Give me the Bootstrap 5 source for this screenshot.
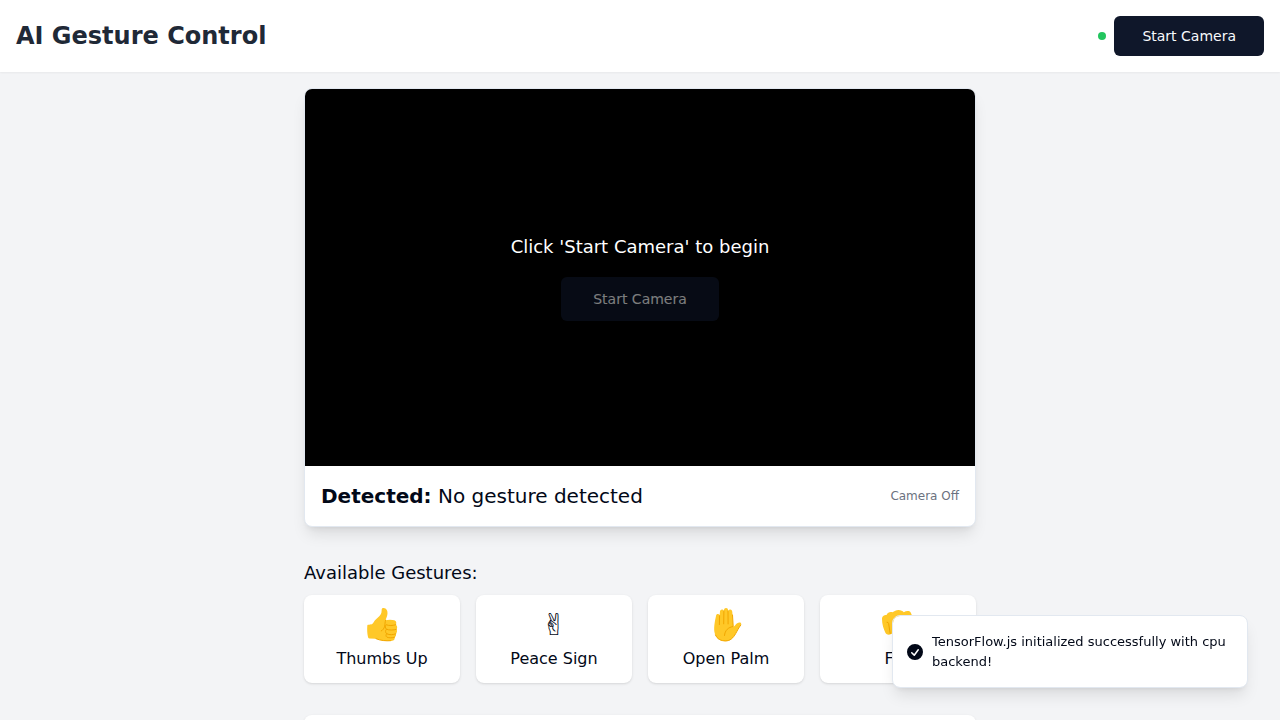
<!DOCTYPE html>
<html lang="en">
<head>
<meta charset="utf-8">
<meta name="viewport" content="width=device-width, initial-scale=1">
<title>AI Gesture Control</title>
<link href="https://cdn.jsdelivr.net/npm/bootstrap@5.3.0/dist/css/bootstrap.min.css" rel="stylesheet">
<style>
  body {
    --ink: #020817;
    --line: #e2e8f0;
    background: #f3f4f6;
    color: var(--ink);
    font-family: "DejaVu Sans", sans-serif;
  }
  .shadow-soft { box-shadow: 0 1px 2px 0 rgba(0, 0, 0, .05); }
  .shadow-tile { box-shadow: 0 1px 3px 0 rgba(0, 0, 0, .1), 0 1px 2px -1px rgba(0, 0, 0, .1); }
  .shadow-raised { box-shadow: 0 10px 15px -3px rgba(0, 0, 0, .1), 0 4px 6px -4px rgba(0, 0, 0, .1); }
  .app-title { color: #1f2937; font-size: 24px; line-height: 32px; }
  .status-dot { width: 8px; height: 8px; background: #22c55e; }
  .btn-ink {
    --bs-btn-color: #f8fafc;
    --bs-btn-bg: #0f172a;
    --bs-btn-hover-color: #f8fafc;
    --bs-btn-hover-bg: #1e293b;
    --bs-btn-disabled-color: #f8fafc;
    --bs-btn-disabled-bg: #0f172a;
    --bs-btn-disabled-opacity: .5;
    --bs-btn-border-width: 0;
    --bs-btn-border-radius: 6px;
    --bs-btn-font-size: 14px;
    --bs-btn-line-height: 20px;
    --bs-btn-padding-x: 28px;
    --bs-btn-padding-y: 10px;
  }
  .btn-ink-lg { --bs-btn-padding-x: 32px; --bs-btn-padding-y: 12px; }
  .page-column { max-width: 704px; }
  .camera-card { --bs-card-border-color: var(--line); --bs-card-color: var(--ink); --bs-card-border-radius: 8px; }
  .camera-view { aspect-ratio: 16 / 9; }
  .text-md { font-size: 18px; line-height: 28px; }
  .text-lg { font-size: 20px; line-height: 28px; }
  .camera-state { color: #6b7280; font-size: 12px; line-height: 16px; }
  .tile { padding: 12px; border-radius: 8px; }
  .tile-icon { font-size: 30px; line-height: 36px; }
  .hand { display: block; margin: 0 auto; width: 36px; height: 36px; fill: #ffc828; }
  .hand .crease { fill: none; stroke: #f2a600; stroke-width: 1; stroke-linecap: round; stroke-linejoin: round; }
  .info-panel { min-height: 120px; border-radius: 8px; }
  .notice {
    --bs-toast-max-width: 356px;
    --bs-toast-bg: #fff;
    --bs-toast-border-color: var(--line);
    --bs-toast-border-radius: 8px;
    --bs-toast-font-size: 13px;
    --bs-toast-color: var(--ink);
    box-shadow: 0 10px 15px -3px rgba(0, 0, 0, .1), 0 4px 6px -4px rgba(0, 0, 0, .1);
  }
  .notice-body { gap: 7px; padding: 16px 16px 16px 12px; }
  .notice-area { padding: 32px; }
</style>
</head>
<body>
<header class="bg-white shadow-soft p-3 d-flex justify-content-between align-items-center">
  <h1 class="app-title fw-bold mb-0">AI Gesture Control</h1>
  <div class="d-flex align-items-center gap-2">
    <span class="status-dot rounded-circle"></span>
    <button type="button" class="btn btn-ink">Start Camera</button>
  </div>
</header>

<main class="page-column container-fluid p-3">
  <section class="card camera-card shadow-raised overflow-hidden">
    <div class="camera-view bg-black text-white d-flex flex-column align-items-center justify-content-center">
      <p class="text-md mb-3">Click 'Start Camera' to begin</p>
      <button type="button" class="btn btn-ink btn-ink-lg" disabled>Start Camera</button>
    </div>
    <div class="d-flex justify-content-between align-items-center p-3">
      <p class="text-lg mb-0"><strong>Detected:</strong> No gesture detected</p>
      <span class="camera-state">Camera Off</span>
    </div>
  </section>

  <section class="pt-3 mt-3">
    <h2 class="text-md fw-normal mb-2">Available Gestures:</h2>
    <div class="row row-cols-2 row-cols-md-4 g-3 text-center">
      <div class="col"><div class="tile bg-white shadow-tile">
        <div class="tile-icon mb-1">
          <svg class="hand" viewBox="0 0 36 36" aria-hidden="true">
            <path d="M4 17.8C7.500 17.600 8.500 17.200 9.500 15.500C11 12.500 13.500 11 15.500 9C17.800 6.700 17.500 4.500 17.700 2.500C17.900 1.200 18.500 1 19.700 1C22.500 1.300 23.600 3.500 23.500 6.300C23.400 9 22.500 10.500 21.600 13.200C24 12.600 28 12.500 30.300 13.300C32.400 14 32.800 16 31.800 17.700C33.500 18.600 33.600 21 32.400 22.300C33.400 23.500 33.200 25.700 31.800 26.800C32.500 28 32 29.500 30.600 30.200C31.200 33 29 34 26.500 34C22 34.300 16.500 33.400 12 31.700L5.500 31.500C4.300 31.500 4.200 30.800 3.900 29.500C3.200 26 3 22.500 3.300 18.700Q3.300 17.900 4 17.800Z"/>
            <path class="crease" d="M21.600 13.200C20.800 15.500 21.200 17 20.600 19.300C20.200 21.500 18.800 23.200 17.300 23.900M31.800 17.700C29 18.800 24.500 18.800 22.200 17.700C21 19 21 20.800 22.400 22.200C25 23.300 29.500 23.300 32.400 22.300M22.400 22.200C21 23.700 21.400 25.600 22.700 26.800C25.500 28 29 28 31.800 26.800M22.700 26.800C21.600 28 21.800 29.300 23 30.200C25.300 31 28 31 30.600 30.200M12 31.700C16.500 33.700 22 34 26.500 33.700"/>
          </svg>
        </div><div>Thumbs Up</div>
      </div></div>
      <div class="col"><div class="tile bg-white shadow-tile">
        <div class="tile-icon mb-1">✌</div><div>Peace Sign</div>
      </div></div>
      <div class="col"><div class="tile bg-white shadow-tile">
        <div class="tile-icon mb-1">
          <svg class="hand" viewBox="0 0 36 36" aria-hidden="true">
            <path d="M8 9C8.200 7.500 9 7 10 7.100C11.200 7.100 11.600 8 11.600 9L12 4.500C12.200 3 13 2.300 14.200 2.400C15.500 2.500 15.900 3.400 15.900 4.500L16 3C16.100 1.700 16.900 1 18 1C19.300 1 20 1.900 20 3L20.100 4.500C20.300 3.200 21.100 2.500 22.200 2.600C23.500 2.700 24.200 3.500 24.300 5L25.200 19.500C26 19.500 26.500 19.200 27.200 18.300C28.700 16.300 30.500 15.200 32 15.600C33.300 15.900 33.600 17 32.600 18.300C30.500 21 29.500 23.500 27.700 26.500C25.200 31 22.200 34.200 17.500 34.200C12.800 34.200 8.500 32.200 6.800 26.500C5.400 21.500 6.800 14.500 8 9Z"/>
            <path class="crease" d="M11.600 8.700L11.400 17.600M15.900 4L15.700 16.800M20 4L20.100 16.900M24.500 8L25.200 19.500C20.500 20.200 16.800 23.300 16.500 28.500M32.800 18C30.500 21 29.500 23.500 27.700 26.500C25.200 31 22.200 33.900 17.500 33.900C13 33.900 9.300 32.200 7.500 28"/>
          </svg>
        </div><div>Open Palm</div>
      </div></div>
      <div class="col"><div class="tile bg-white shadow-tile">
        <div class="tile-icon mb-1">
          <svg class="hand" viewBox="0 0 36 36" aria-hidden="true">
            <path d="M2 12C2 9 4 8.200 6.500 8C8 5.200 9.800 4.800 12.500 5.300C14.500 4.500 16 3 18.500 3C21 3 22.500 4 23.800 5.200C26 3.800 29.500 3.500 30.700 5.500C33 10 33.500 17 33 23C34.500 25 34.300 28 33.500 31C30 32.500 23 32 19.300 31.200C18.600 29.500 18.800 28.500 18 27C16.500 28 13.500 28 11.500 26.800C9.500 28 7 28.300 5.500 26C3.500 22 2 17 2 12Z"/>
            <path class="crease" d="M7 15.200Q8.400 15 8.600 16.500L10.200 26.500M15 13.800Q16.300 13.600 16.300 15L18 27M24 12.800Q25.500 12.600 25.200 14L26 24.500C28 25.500 31 25 33 23M19 29Q19.500 26.500 26 26"/>
          </svg>
        </div><div>Fist</div>
      </div></div>
    </div>
  </section>

  <section class="pt-3 mt-3">
    <div class="info-panel bg-white shadow-tile"></div>
  </section>
</main>

<div class="toast-container notice-area position-fixed bottom-0 end-0">
  <div class="toast notice show" role="status">
    <div class="notice-body d-flex align-items-center">
      <svg class="flex-shrink-0" width="20" height="20" viewBox="0 0 20 20" fill="currentColor" aria-hidden="true"><path fill-rule="evenodd" clip-rule="evenodd" d="M10 18a8 8 0 100-16 8 8 0 000 16zm3.857-9.809a.75.75 0 00-1.214-.882l-3.483 4.79-1.88-1.88a.75.75 0 10-1.06 1.061l2.5 2.5a.75.75 0 001.137-.089l4-5.5z"/></svg>
      <div>TensorFlow.js initialized successfully with cpu backend!</div>
    </div>
  </div>
</div>
<script src="https://cdn.jsdelivr.net/npm/bootstrap@5.3.0/dist/js/bootstrap.bundle.min.js"></script>
</body>
</html>
